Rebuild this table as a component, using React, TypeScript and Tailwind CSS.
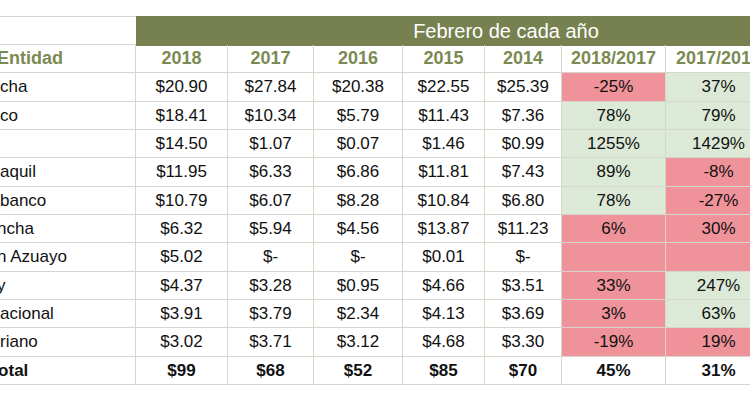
import React from 'react';

type Tone = 'red' | 'green' | 'none';

interface Row {
    name: string;
    values: string[];
    ratios: [string, Tone][];
}

const rows: Row[] = [
    { name: 'cha', values: ['$20.90', '$27.84', '$20.38', '$22.55', '$25.39'], ratios: [['-25%', 'red'], ['37%', 'green']] },
    { name: 'co', values: ['$18.41', '$10.34', '$5.79', '$11.43', '$7.36'], ratios: [['78%', 'green'], ['79%', 'green']] },
    { name: '', values: ['$14.50', '$1.07', '$0.07', '$1.46', '$0.99'], ratios: [['1255%', 'green'], ['1429%', 'green']] },
    { name: 'aquil', values: ['$11.95', '$6.33', '$6.86', '$11.81', '$7.43'], ratios: [['89%', 'green'], ['-8%', 'red']] },
    { name: 'banco', values: ['$10.79', '$6.07', '$8.28', '$10.84', '$6.80'], ratios: [['78%', 'green'], ['-27%', 'red']] },
    { name: 'ncha', values: ['$6.32', '$5.94', '$4.56', '$13.87', '$11.23'], ratios: [['6%', 'red'], ['30%', 'red']] },
    { name: 'n Azuayo', values: ['$5.02', '$-', '$-', '$0.01', '$-'], ratios: [['', 'red'], ['', 'red']] },
    { name: 'y', values: ['$4.37', '$3.28', '$0.95', '$4.66', '$3.51'], ratios: [['33%', 'red'], ['247%', 'green']] },
    { name: 'acional', values: ['$3.91', '$3.79', '$2.34', '$4.13', '$3.69'], ratios: [['3%', 'red'], ['63%', 'green']] },
    { name: 'riano', values: ['$3.02', '$3.71', '$3.12', '$4.68', '$3.30'], ratios: [['-19%', 'red'], ['19%', 'red']] },
];

const years = ['2018', '2017', '2016', '2015', '2014', '2018/2017', '2017/2016'];

const cols = 'grid grid-cols-[136px_92px_86px_89px_82px_77px_104px_106px]';
const cell = 'flex items-center justify-center border-r border-[#d6d7cc] whitespace-nowrap overflow-hidden';

const toneBg = (t: Tone) => {
    switch (t) {
        case 'red': return 'bg-[#f0929a] border-[#b7a99a]';
        case 'green': return 'bg-[#dbe9d6] border-[#b3c1a3]';
        default: return 'bg-white';
    }
};

export default function App() {
    return (
        <div className="w-[750px] h-[400px] overflow-hidden bg-white pt-4 text-[17px] text-[#111] font-['Liberation_Sans',Arial,sans-serif]">
            <div className="w-[772px]">
                {/* Title row */}
                <div className={`${cols} h-[29px] border-b border-[#d6d7cc]`}>
                    <div className="border-t border-[#d6d7cc]" />
                    <div className="col-span-7 bg-[#76814f] flex items-center justify-center text-white text-[20px] pl-[104px]">
                        Febrero de cada año
                    </div>
                </div>

                {/* Header */}
                <div className={`${cols} h-[28.33px] border-b border-[#d6d7cc] font-bold text-[18px] text-[#7b8a52]`}>
                    <div className={`${cell} justify-start`}>
                        <span className="-ml-[3px]">Entidad</span>
                    </div>
                    {years.map((y) => (
                        <div key={y} className={cell}>{y}</div>
                    ))}
                </div>

                {/* Body */}
                {rows.map((r, i) => (
                    <div key={i} className={`${cols} h-[28.33px] border-b border-[#d6d7cc]`}>
                        <div className={`${cell} justify-start`}>
                            <span className={r.name.startsWith('n') || r.name === 'y' ? '-ml-[3px]' : ''}>{r.name}</span>
                        </div>
                        {r.values.map((v, j) => (
                            <div key={j} className={cell}>{v}</div>
                        ))}
                        {r.ratios.map(([v, t], j) => (
                            <div key={j} className={`${cell} ${toneBg(t)}`}>{v}</div>
                        ))}
                    </div>
                ))}

                {/* Total */}
                <div className={`${cols} h-[28.33px] border-b border-[#d6d7cc] font-bold`}>
                    <div className={`${cell} justify-start`}>
                        <span className="-ml-[11px]">Total</span>
                    </div>
                    {['$99', '$68', '$52', '$85', '$70', '45%', '31%'].map((v, j) => (
                        <div key={j} className={cell}>{v}</div>
                    ))}
                </div>
            </div>
        </div>
    );
}
